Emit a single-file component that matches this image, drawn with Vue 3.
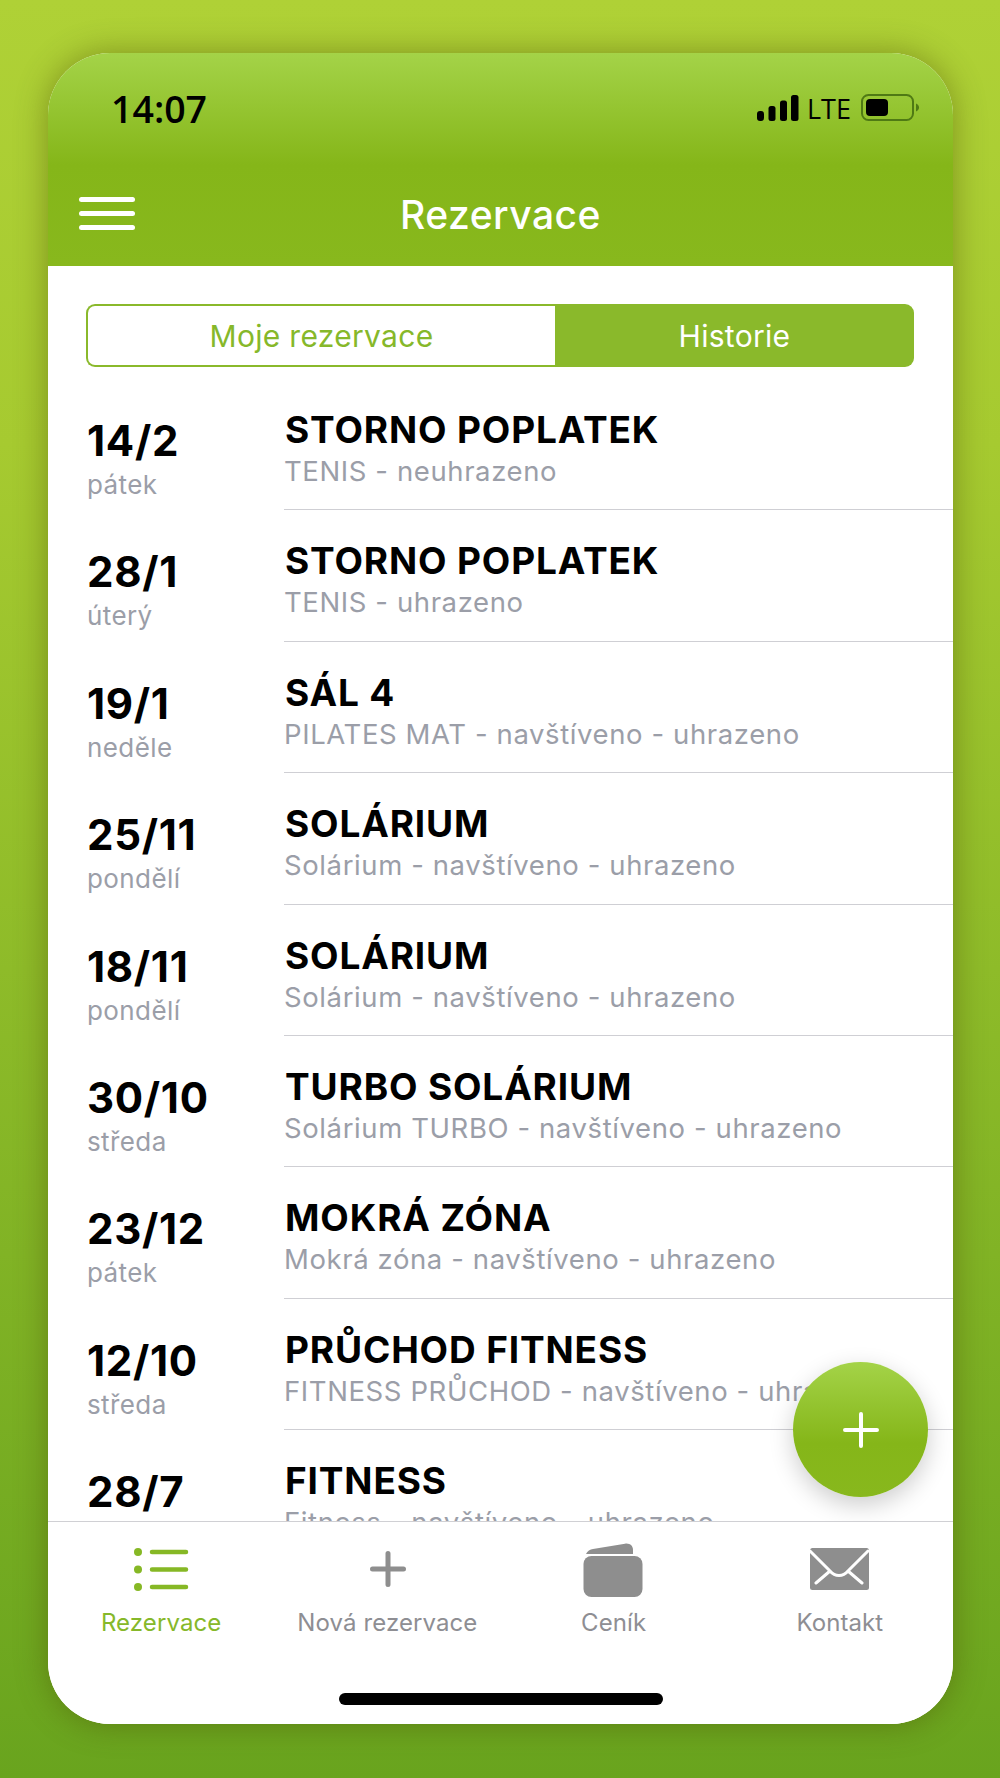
<template>
  <div class="page">
    <div class="phone">
      <header class="header">
        <div class="status">
          <span class="time">14:07</span>
          <div class="status-right">
            <svg class="signal" width="42" height="26" viewBox="0 0 42 26">
              <rect x="0" y="16" width="7" height="10" rx="3" />
              <rect x="11.5" y="11" width="7" height="15" rx="2.5" />
              <rect x="23" y="5.500" width="7" height="20.500" rx="2.500" />
              <rect x="34" y="0" width="7.500" height="26" rx="2.500" />
            </svg>
            <span class="lte">LTE</span>
            <svg class="battery" width="59" height="28" viewBox="0 0 59 28">
              <rect x="1" y="1" width="51" height="25" rx="6.500" fill="none" stroke="#4f7a14" stroke-width="2" />
              <rect x="5" y="5" width="22" height="17" rx="4" fill="#000" />
              <path d="M55 9.500c2 .8 3 2.400 3 4s-1 3.200-3 4z" fill="#4f7a14" />
            </svg>
          </div>
        </div>
        <div class="nav">
          <div class="burger"><i></i><i></i><i></i></div>
          <h1>Rezervace</h1>
        </div>
      </header>

      <div class="segment">
        <div class="seg seg-on">Moje rezervace</div>
        <div class="seg seg-off">Historie</div>
      </div>

      <div class="list">
        <div v-for="item in items" :key="item.date" class="row">
          <div class="when">
            <div class="date">{{ item.date }}</div>
            <div class="day">{{ item.day }}</div>
          </div>
          <div class="what">
            <div class="title">{{ item.title }}</div>
            <div class="sub">{{ item.sub }}</div>
          </div>
        </div>
      </div>

      <div class="fab">
        <svg width="36" height="36" viewBox="0 0 36 36">
          <path d="M18 2v32M2 18h32" stroke="#fff" stroke-width="4" stroke-linecap="round" />
        </svg>
      </div>

      <nav class="tabs">
        <div class="tab active">
          <svg width="64" height="48" viewBox="0 0 64 48">
            <circle cx="9" cy="9" r="4" fill="#86b825" />
            <circle cx="9" cy="26.500" r="4" fill="#86b825" />
            <circle cx="9" cy="44" r="4" fill="#86b825" />
            <path d="M23 9h34M23 26.500h34M23 44h34" stroke="#86b825" stroke-width="4.500" stroke-linecap="round" />
          </svg>
          <span>Rezervace</span>
        </div>
        <div class="tab">
          <svg width="64" height="48" viewBox="0 0 64 48">
            <path d="M33 10.500v31M17.500 26h31" stroke="#8e8e8e" stroke-width="5" stroke-linecap="round" />
          </svg>
          <span>Nová rezervace</span>
        </div>
        <div class="tab">
          <svg width="64" height="56" viewBox="0 0 64 56" class="wallet">
            <path d="M4 11C5.500 8 8 6.500 11 6L43 .7C48 0 51 3 51 7V11z" fill="#8e8e8e" />
            <rect x="1.500" y="13" width="59" height="41" rx="8" fill="#8e8e8e" />
          </svg>
          <span>Ceník</span>
        </div>
        <div class="tab">
          <svg width="64" height="48" viewBox="0 0 64 48">
            <rect x="2" y="5" width="59" height="42" rx="2.500" fill="#8e8e8e" />
            <path d="M2 8L22 28c5 6 13 6 18 0L60 8M8 40l14-12M54 40L40 28" fill="none" stroke="#fff" stroke-width="3" stroke-linecap="round" />
          </svg>
          <span>Kontakt</span>
        </div>
      </nav>
      <div class="home-bar"></div>
    </div>
  </div>
</template>

<script setup>
const items = [
  { date: "14/2", day: "pátek", title: "STORNO POPLATEK", sub: "TENIS - neuhrazeno" },
  { date: "28/1", day: "úterý", title: "STORNO POPLATEK", sub: "TENIS - uhrazeno" },
  { date: "19/1", day: "neděle", title: "SÁL 4", sub: "PILATES MAT - navštíveno - uhrazeno" },
  { date: "25/11", day: "pondělí", title: "SOLÁRIUM", sub: "Solárium - navštíveno - uhrazeno" },
  { date: "18/11", day: "pondělí", title: "SOLÁRIUM", sub: "Solárium - navštíveno - uhrazeno" },
  { date: "30/10", day: "středa", title: "TURBO SOLÁRIUM", sub: "Solárium TURBO - navštíveno - uhrazeno" },
  { date: "23/12", day: "pátek", title: "MOKRÁ ZÓNA", sub: "Mokrá zóna - navštíveno - uhrazeno" },
  { date: "12/10", day: "středa", title: "PRŮCHOD FITNESS", sub: "FITNESS PRŮCHOD - navštíveno - uhrazeno" },
  { date: "28/7", day: "čtvrtek", title: "FITNESS", sub: "Fitness - navštíveno - uhrazeno" },
];
</script>

<style>
html,
body {
  margin: 0;
}
</style>

<style scoped>
.page {
  box-sizing: border-box;
  width: 1000px;
  height: 1778px;
  padding: 53px 47px 54px 48px;
  background: linear-gradient(#afd136 0%, #a6ca30 25%, #69a41e 100%);
  font-family: Inter, "Liberation Sans", sans-serif;
  overflow: hidden;
}

.phone {
  position: relative;
  display: flex;
  flex-direction: column;
  height: 100%;
  background: #fff;
  border-radius: 62px;
  overflow: hidden;
  box-shadow: 0 0 32px rgba(70, 70, 0, 0.45);
}

.header {
  flex: none;
  height: 213px;
  background: linear-gradient(#a4d348 0, #85b619 112px, #88b81d 213px);
}

.status {
  display: flex;
  justify-content: space-between;
  align-items: center;
  height: 110px;
  padding: 0 33px 0 63px;
}

.time {
  font-family: "Open Sans", sans-serif;
  font-weight: 600;
  font-size: 37.500px;
  color: #000;
}

.status-right {
  display: flex;
  align-items: center;
}

.signal {
  fill: #000;
}

.lte {
  font-family: "Open Sans", sans-serif;
  font-size: 27px;
  color: #000;
  margin: 0 10px 0 8px;
}

.nav {
  position: relative;
  display: flex;
  justify-content: center;
  align-items: center;
  height: 103px;
}

.nav h1 {
  margin: 0;
  font-size: 39px;
  font-weight: 500;
  letter-spacing: 0.5px;
  color: #fff;
}

.burger {
  position: absolute;
  left: 31px;
  top: 34px;
  display: flex;
  flex-direction: column;
  gap: 9px;
}

.burger i {
  display: block;
  width: 56px;
  height: 5px;
  border-radius: 3px;
  background: #fff;
}

.segment {
  flex: none;
  display: flex;
  height: 63px;
  margin: 38px 39px 12px 38px;
  box-sizing: border-box;
  font-size: 30px;
  letter-spacing: 0.3px;
}

.seg {
  display: flex;
  justify-content: center;
  align-items: center;
  box-sizing: border-box;
}

.seg-on {
  width: 469px;
  color: #86b82a;
  border: 2px solid #8ab92b;
  border-right: none;
  border-radius: 9px 0 0 9px;
}

.seg-off {
  flex: 1;
  color: #fff;
  background: #8ab92b;
  border-radius: 0 9px 9px 0;
}

.list {
  flex: 1;
  min-height: 0;
  overflow: hidden;
  padding-left: 38px;
}

.row {
  display: flex;
  height: 131.400px;
}

.when {
  box-sizing: border-box;
  width: 198px;
  flex: none;
  padding: 39px 0 0 0;
}

.date {
  font-size: 42px;
  font-weight: 700;
  line-height: 46px;
  letter-spacing: 0.7px;
  margin-left: 1px;
  color: #000;
}

.day {
  font-size: 26px;
  line-height: 30px;
  margin-top: 6px;
  margin-left: 1px;
  letter-spacing: 0.4px;
  color: #9b9ea8;
}

.what {
  flex: 1;
  box-sizing: border-box;
  height: 131.400px;
  padding-top: 31px;
  border-bottom: 1.500px solid #cfcfd4;
}

.title {
  font-size: 37px;
  font-weight: 700;
  line-height: 40px;
  letter-spacing: 0.85px;
  margin-left: 1px;
  color: #000;
}

.sub {
  font-size: 27.500px;
  line-height: 34px;
  margin-top: 4px;
  letter-spacing: 0.6px;
  color: #9b9ea8;
  white-space: nowrap;
}

.fab {
  position: absolute;
  left: 745px;
  top: 1309px;
  display: flex;
  justify-content: center;
  align-items: center;
  width: 135px;
  height: 135px;
  border-radius: 50%;
  background: linear-gradient(#a4d348 0, #85b619 60%, #88b81d 100%);
  box-shadow: 0 8px 24px rgba(0, 0, 0, 0.2);
}

.tabs {
  flex: none;
  display: grid;
  grid-template-columns: repeat(4, 1fr);
  height: 203px;
  box-sizing: border-box;
  border-top: 1.500px solid #d0d0d4;
  background: #fff;
  position: relative;
}

.tab {
  display: flex;
  flex-direction: column;
  align-items: center;
  padding-top: 21px;
  font-size: 24px;
  letter-spacing: 0.1px;
  color: #8e8e93;
}

.tab svg {
  display: block;
}

.tab span {
  margin-top: 17px;
  line-height: 30px;
}

.tab.active {
  color: #86b82a;
}

.wallet {
  margin-bottom: -8px;
}

.home-bar {
  position: absolute;
  left: 291px;
  top: 1640px;
  width: 324px;
  height: 12px;
  border-radius: 6px;
  background: #000;
}
</style>
